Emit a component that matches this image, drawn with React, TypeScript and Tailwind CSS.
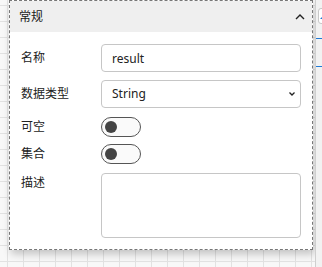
import React, { useState } from 'react';

const font = { fontFamily: '"Noto Sans", "Noto Sans CJK SC", sans-serif' };

const Toggle = ({ on, onChange }: { on: boolean; onChange: (v: boolean) => void }) => (
    <button
        onClick={() => onChange(!on)}
        className="relative h-[20px] w-[40px] rounded-full border border-[#555] bg-[#fafafa]"
    >
        <span
            className={`absolute top-[3px] h-[12px] w-[12px] rounded-full bg-[#444] ${on ? 'left-[24px]' : 'left-[3px]'}`}
        />
    </button>
);

export default function App() {
    const [name, setName] = useState('result');
    const [type, setType] = useState('String');
    const [nullable, setNullable] = useState(false);
    const [isList, setIsList] = useState(false);
    const [open, setOpen] = useState(true);

    return (
        <div
            className="relative h-[267px] w-[322px] overflow-hidden bg-[#f8f8f8] bg-[linear-gradient(to_right,#e2e2e2_1px,transparent_1px),linear-gradient(to_bottom,#e2e2e2_1px,transparent_1px)] bg-[size:16px_16px] bg-[position:7px_5px] text-[12px] text-[#222]"
            style={font}
        >
            {/* neighbouring node, mostly hidden */}
            <div className="absolute left-[315px] top-0 h-full w-[20px] border-l border-[#cfcfcf] bg-[#f2f2f2]">
                <div className="ml-[2px] mt-[8px] h-[16px] w-[16px] rounded-[3px] border border-[#c8c8c8] bg-white">
                    <svg width="8" height="8" viewBox="0 0 8 8" className="ml-[1px] mt-[3px]">
                        <path d="M0 7 L6 1 L6 7 Z" fill="#1e7ad8" />
                    </svg>
                </div>
                <div className="mt-[14px] h-px w-full bg-[#1e7ad8]" />
                <div className="mt-[27px] h-px w-full bg-[#1e7ad8]" />
            </div>

            {/* Property panel */}
            <div className="ml-[9px] flex h-[250px] w-[304px] flex-col border border-dashed border-[#777] bg-white shadow-[2px_4px_8px_rgba(0,0,0,0.22)]">
                {/* Header */}
                <div
                    onClick={() => setOpen(!open)}
                    className="flex h-[31px] shrink-0 cursor-pointer items-center justify-between bg-[#efefef] pl-[9px] pr-[7px]"
                >
                    <span className="text-[12px] text-[#1a1a1a]">常规</span>
                    <svg width="10" height="6" viewBox="0 0 10 6">
                        <path d="M1 5 L5 1 L9 5" fill="none" stroke="#222" strokeWidth="1.4" />
                    </svg>
                </div>

                {/* Body */}
                {open && (
                    <div className="flex flex-col px-[11px] pt-[12px]">
                        <div className="flex h-[28px] items-center">
                            <label className="w-[80px] shrink-0">名称</label>
                            <input
                                value={name}
                                onChange={e => setName(e.target.value)}
                                className="h-[28px] w-[200px] rounded-[4px] border border-[#c6c6c6] px-[10px] text-[12px] outline-none"
                                style={font}
                            />
                        </div>

                        <div className="mt-[8px] flex h-[28px] items-center">
                            <label className="w-[80px] shrink-0">数据类型</label>
                            <div className="relative h-[28px] w-[200px]">
                                <select
                                    value={type}
                                    onChange={e => setType(e.target.value)}
                                    className="h-full w-full appearance-none rounded-[4px] border border-[#c6c6c6] bg-white px-[10px] text-[12px] outline-none"
                                    style={font}
                                >
                                    <option>String</option>
                                    <option>Integer</option>
                                    <option>Boolean</option>
                                </select>
                                <svg width="6" height="4" viewBox="0 0 6 4" className="pointer-events-none absolute right-[6px] top-[12px]">
                                    <path d="M0.5 0.5 L3 3 L5.5 0.5" fill="none" stroke="#222" strokeWidth="1.3" />
                                </svg>
                            </div>
                        </div>

                        <div className="mt-[9px] flex h-[20px] items-center">
                            <label className="w-[80px] shrink-0">可空</label>
                            <Toggle on={nullable} onChange={setNullable} />
                        </div>

                        <div className="mt-[7px] flex h-[20px] items-center">
                            <label className="w-[80px] shrink-0">集合</label>
                            <Toggle on={isList} onChange={setIsList} />
                        </div>

                        <div className="mt-[9px] flex items-start">
                            <label className="w-[80px] shrink-0 pt-[1px]">描述</label>
                            <textarea className="h-[65px] w-[200px] resize-none rounded-[4px] border border-[#c6c6c6] px-[10px] py-[4px] text-[12px] outline-none" />
                        </div>
                    </div>
                )}
            </div>
        </div>
    );
}
